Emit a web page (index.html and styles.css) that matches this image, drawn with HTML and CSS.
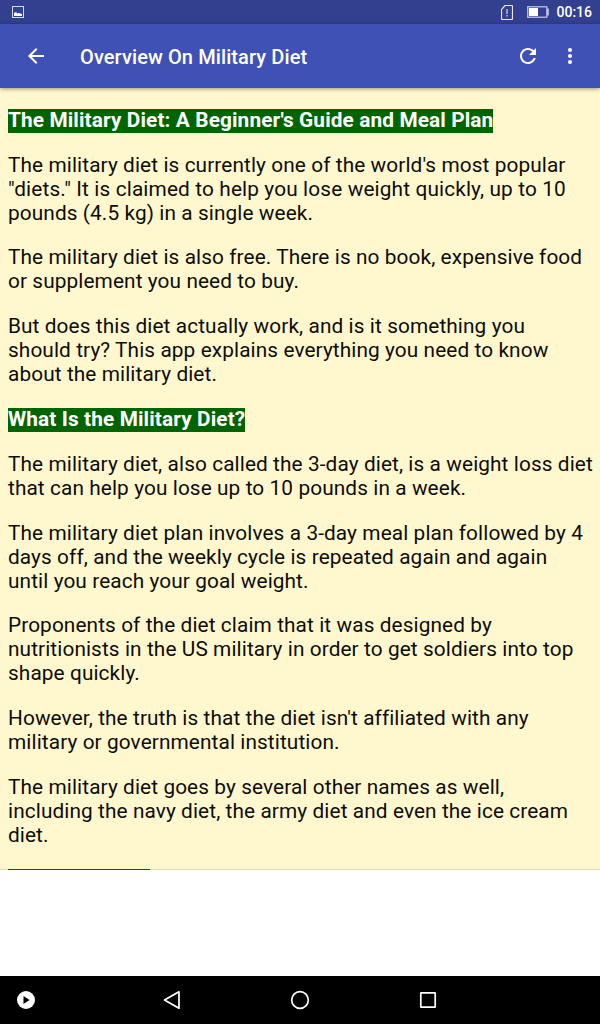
FILE: index.html
```html
<!DOCTYPE html>
<html lang="en">
<head>
<title>Overview On Military Diet</title>
<meta charset="utf-8">
<meta name="viewport" content="width=device-width, initial-scale=1">
    <link rel="stylesheet" href="styles.css">
</head>
<body>
    <div class="statusbar">
        <svg class="picture" width="12" height="12" viewBox="0 0 12 12">
            <rect x=".5" y=".5" width="11" height="11" fill="none" stroke="#d5d9ef"/>
            <path d="M2 10V7l2-1 1.5 1.5L7 7l1.500.5L10 8v2z" fill="#fff"/>
        </svg>
        <svg class="sim" width="12" height="15" viewBox="0 0 12 15">
            <path d="M4 .5h6.500a1 1 0 0 1 1 1v12a1 1 0 0 1-1 1h-9a1 1 0 0 1-1-1V4.500z" fill="none" stroke="#e6e9f7" stroke-width="1.200"/>
            <path d="M6 4v5M6 10v1.500" stroke="#b4bbe3" stroke-width="1.500"/>
        </svg>
        <svg class="battery" width="22" height="12" viewBox="0 0 22 12">
            <rect x=".75" y=".75" width="19" height="10.500" fill="none" stroke="#a9b1dc" stroke-width="1.500"/>
            <rect x="2" y="2" width="9" height="8" fill="#fff"/>
            <path d="M21 2.500v7" stroke="#d5d9ef" stroke-width="1.500"/>
        </svg>
        <span class="clock">00:16</span>
    </div>
    <header>
        <svg class="back" width="24" height="24" viewBox="0 0 24 24">
            <path d="M20 11H7.830l5.590-5.590L12 4l-8 8 8 8 1.410-1.410L7.830 13H20v-2z"/>
        </svg>
        <h1>Overview On Military Diet</h1>
        <svg class="refresh" width="24" height="24" viewBox="0 0 24 24">
            <path d="M17.650 6.350C16.200 4.900 14.210 4 12 4c-4.420 0-7.990 3.580-7.990 8s3.570 8 7.990 8c3.730 0 6.840-2.550 7.730-6h-2.080c-.82 2.330-3.040 4-5.650 4-3.310 0-6-2.690-6-6s2.690-6 6-6c1.660 0 3.140.69 4.220 1.780L13 11h7V4l-2.350 2.350z"/>
        </svg>
        <svg width="24" height="24" viewBox="0 0 24 24">
            <circle cx="12" cy="6" r="2"/>
            <circle cx="12" cy="12" r="2"/>
            <circle cx="12" cy="18" r="2"/>
        </svg>
    </header>
    <main class="article">
        <p><b>The Military Diet: A Beginner's Guide and Meal Plan</b></p>
        <p>The military diet is currently one of the world's most popular<br><span class="wide">"diets." It is claimed to help you lose weight quickly, up to 10</span><br>pounds (4.5 kg) in a single week.</p>
        <p>The military diet is also free. There is no book, expensive food<br>or supplement you need to buy.</p>
        <p>But does this diet actually work, and is it something you<br>should try? This app explains everything you need to know<br>about the military diet.</p>
        <p><b>What Is the Military Diet?</b></p>
        <p>The military diet, also called the 3-day diet, is a weight loss diet<br>that can help you lose up to 10 pounds in a week.</p>
        <p>The military diet plan involves a 3-day meal plan followed by 4<br>days off, and the weekly cycle is repeated again and again<br>until you reach your goal weight.</p>
        <p>Proponents of the diet claim that it was designed by<br>nutritionists in the US military in order to get soldiers into top<br>shape quickly.</p>
        <p>However, the truth is that the diet isn't affiliated with any<br>military or governmental institution.</p>
        <p>The military diet goes by several other names as well,<br>including the navy diet, the army diet and even the ice cream<br>diet.</p>
        <div class="next-heading"></div>
    </main>
    <div class="ad-space"></div>
    <nav class="navbar">
        <svg class="play" width="20" height="20" viewBox="0 0 20 20">
            <circle cx="10" cy="10" r="9" fill="#fff"/>
            <path d="M7.500 6l6 4-6 4z" fill="#000"/>
        </svg>
        <svg class="nav-back" width="20" height="20" viewBox="0 0 20 20">
            <path d="M17 1.800v16.400L2.500 10z"/>
        </svg>
        <svg class="nav-home" width="20" height="20" viewBox="0 0 20 20">
            <circle cx="10" cy="10" r="8.300"/>
        </svg>
        <svg class="nav-recent" width="20" height="20" viewBox="0 0 20 20">
            <rect x="2.800" y="2.800" width="14.400" height="14.400" rx=".5"/>
        </svg>
    </nav>
</body>
</html>
```
FILE: styles.css
```css
body {
    font-family: Roboto, sans-serif;
    margin: 0;
    height: 1024px;
    display: flex;
    flex-direction: column;
    overflow: hidden;
    background-color: white;
}
.statusbar {
    height: 24px;
    flex: none;
    display: flex;
    align-items: center;
    box-sizing: border-box;
    padding: 0 8px 0 12px;
    background-color: #333f8f;
    color: white;
}
.sim {
    margin-left: auto;
    margin-right: 14px;
}
.battery {
    margin-right: 7px;
}
.clock {
    font-size: 14px;
    font-weight: 500;
}
header {
    height: 64px;
    flex: none;
    display: flex;
    align-items: center;
    box-sizing: border-box;
    padding: 0 18px 0 24px;
    background-color: #3f51b5;
    color: white;
    box-shadow: 0 1px 4px rgba(0, 0, 0, 0.4);
    position: relative;
}
header svg {
    fill: white;
}
header h1 {
    flex: 1;
    margin: 2px 0 0 32px;
    font-size: 20px;
    font-weight: 500;
    letter-spacing: 0.1px;
}
.refresh {
    margin-right: 18px;
}
.article {
    height: 782px;
    flex: none;
    box-sizing: border-box;
    overflow: hidden;
    padding: 0 8px;
    box-shadow: inset 0 -1px #dcd9c0;
    background-color: #fff8cf;
    color: #0d0d08;
    font-size: 20.8px;
    line-height: 24px;
    letter-spacing: 0.1px;
    white-space: nowrap;
}
.article p {
    margin: 20.8px 0;
}
.article p:first-child {
    margin-top: 19.8px;
}
.article b {
    display: block;
    width: fit-content;
    box-sizing: border-box;
    height: 25px;
    margin-bottom: -1px;
    border-top: 1px solid transparent;
    background-color: #006400;
    background-clip: padding-box;
    color: white;
    line-height: 22px;
    letter-spacing: 0.12px;
}
.wide {
    letter-spacing: 0.14px;
}
.next-heading {
    width: 142px;
    height: 24px;
    margin-top: 21.8px;
    background-color: #006400;
}
.ad-space {
    flex: 1;
}
.navbar {
    height: 48px;
    flex: none;
    display: flex;
    align-items: center;
    box-sizing: border-box;
    padding-left: 16px;
    background-color: black;
}
.nav-back, .nav-home, .nav-recent {
    fill: none;
    stroke: white;
    stroke-width: 1.7;
    stroke-linejoin: round;
}
.nav-back {
    margin-left: 126px;
}
.nav-home, .nav-recent {
    margin-left: 108px;
}
```
